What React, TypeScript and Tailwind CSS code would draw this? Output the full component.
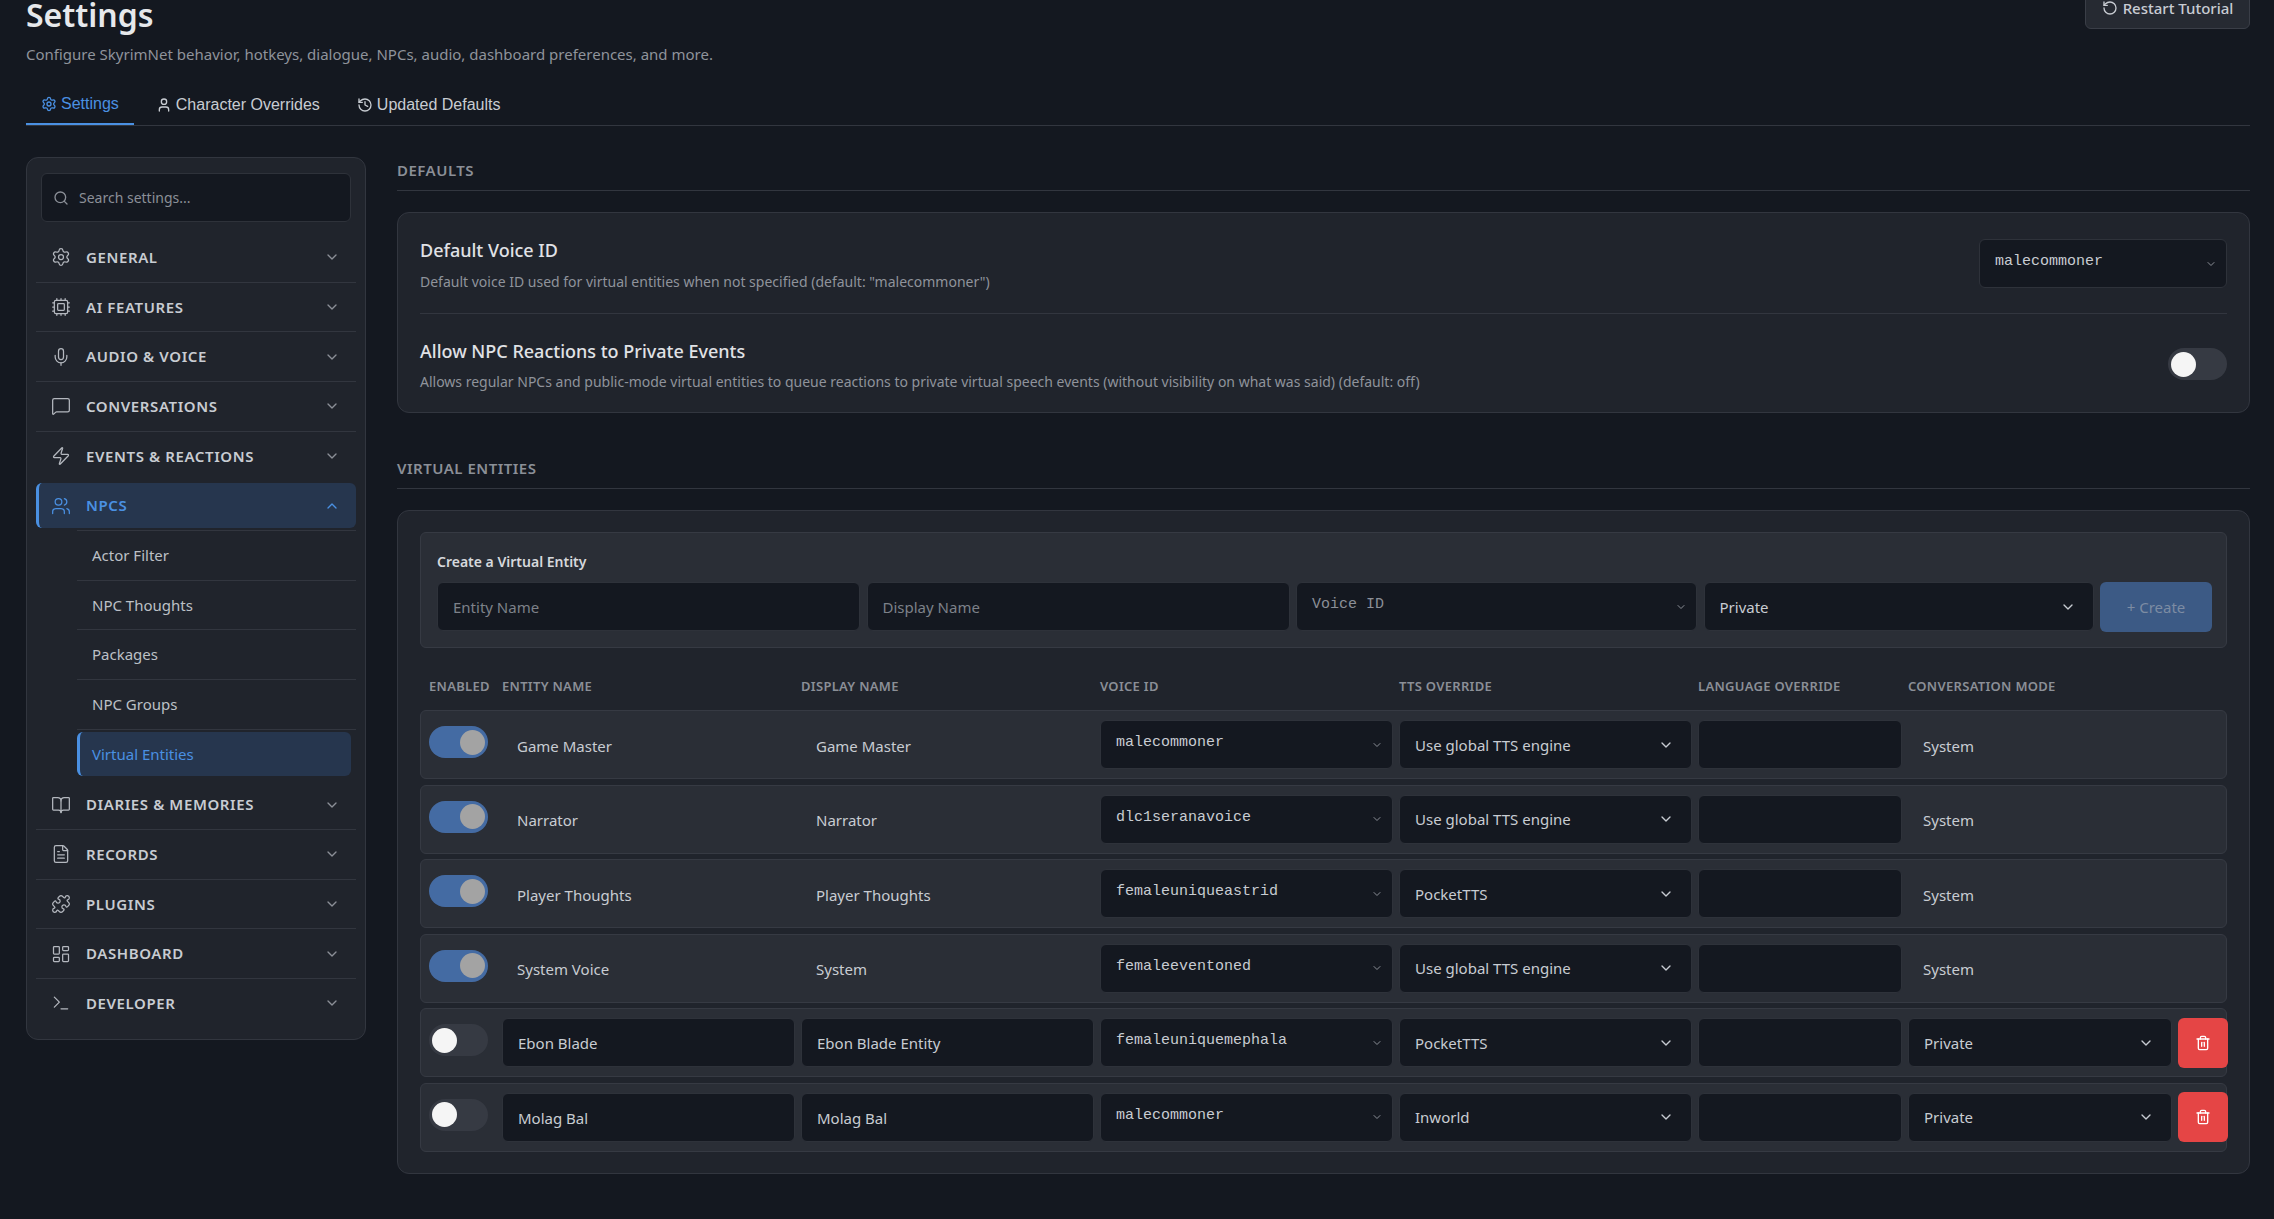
import { BookOpen, ChevronDown, ChevronUp, Cpu, FileText, History, LayoutDashboard, MessageSquare, Mic, Puzzle, RotateCcw, Search, Settings, Terminal, Trash2, User, Users, Zap } from "lucide-react";

const groupsTop = [
    { label: "General", icon: Settings },
    { label: "AI Features", icon: Cpu },
    { label: "Audio & Voice", icon: Mic },
    { label: "Conversations", icon: MessageSquare },
];
const groupsBottom = [
    { label: "Records", icon: FileText },
    { label: "Plugins", icon: Puzzle },
    { label: "Dashboard", icon: LayoutDashboard },
    { label: "Developer", icon: Terminal },
];
const subItems = ["Actor Filter", "NPC Thoughts", "Packages", "NPC Groups"];

const entities = [
    { enabled: true, name: "Game Master", display: "Game Master", voice: "malecommoner", tts: "Use global TTS engine" },
    { enabled: true, name: "Narrator", display: "Narrator", voice: "dlc1seranavoice", tts: "Use global TTS engine" },
    { enabled: true, name: "Player Thoughts", display: "Player Thoughts", voice: "femaleuniqueastrid", tts: "PocketTTS" },
    { enabled: true, name: "System Voice", display: "System", voice: "femaleeventoned", tts: "Use global TTS engine" },
    { enabled: false, name: "Ebon Blade", display: "Ebon Blade Entity", voice: "femaleuniquemephala", tts: "PocketTTS", custom: true },
    { enabled: false, name: "Molag Bal", display: "Molag Bal", voice: "malecommoner", tts: "Inworld", custom: true },
];

const NavRow = ({ label, icon: Icon, line = true }: { label: string; icon: React.ElementType; line?: boolean }) => (
    <div className={`mb-[2px] border-b pb-[2px] ${line ? "border-[#32363f]" : "border-transparent"}`}>
        <div className="flex h-[44.67px] items-center pl-[15px] pr-[16px]">
            <Icon size={20} strokeWidth={1.5} className="text-[#b4b8bf]" />
            <span className="ml-[15px] flex-1 text-[15px] font-semibold uppercase tracking-[0.6px] text-[#c8ccd2]">{label}</span>
            <ChevronDown size={16} className="text-[#8b8f97]" />
        </div>
    </div>
);

const Toggle = ({ on }: { on: boolean }) => (
    <div className={`flex h-[32px] w-[59px] items-center rounded-full px-[3px] ${on ? "justify-end bg-[#446ba3]" : "bg-[#363a43]"}`}>
        <div className={`h-[25px] w-[25px] rounded-full ${on ? "bg-[#a3a3a3]" : "bg-[#f5f5f5]"}`} />
    </div>
);

const MonoSelect = ({ value, placeholder }: { value: string; placeholder?: boolean }) => (
    <div className="flex h-[49px] items-center rounded-[6px] border border-[#2e323a] bg-[#141820] pl-[15px] pr-[9px]">
        <span className={`flex-1 pb-[2px] font-['Liberation_Mono',monospace] text-[15px] ${placeholder ? "text-[#8b8f97]" : "text-[#c8ccd2]"}`}>{value}</span>
        <ChevronDown size={12} className="text-[#8b8f97]" />
    </div>
);

const TextSelect = ({ value }: { value: string }) => (
    <div className="flex h-[49px] items-center rounded-[6px] border border-[#2e323a] bg-[#141820] pl-[15px] pr-[17px]">
        <span className="flex-1 pt-[1px] text-[15px] text-[#c8ccd2]">{value}</span>
        <ChevronDown size={16} className="text-[#c8ccd2]" />
    </div>
);

const Field = ({ value }: { value?: string }) => (
    <input defaultValue={value} className="h-[49px] w-full rounded-[6px] border border-[#2e323a] bg-[#141820] px-[15px] pt-[1px] text-[15px] text-[#c8ccd2] outline-none" />
);

const SectionTitle = ({ children }: { children: string }) => (
    <div className="h-[34px] border-b border-[#32363f] pt-[3px] text-[15px] font-semibold uppercase leading-[20px] tracking-[0.5px] text-[#8b8f97]">{children}</div>
);

const tableCols = "grid grid-cols-[67px_293px_293px_293px_293px_204px_264px_50px] gap-[6px]";

export default function App() {
    return (
        <div className="h-screen overflow-hidden bg-[#141820] pl-[26px] pr-[24px] font-['Noto_Sans',sans-serif] text-[#c8ccd2]">
            <div className="-mt-[11px] flex items-start justify-between">
                <div className="pt-[6px]">
                    <h1 className="text-[32px] font-semibold leading-[40px] text-[#e6e8eb]">Settings</h1>
                    <p className="mt-[7px] text-[15px] leading-[24px] text-[#8f939b]">Configure SkyrimNet behavior, hotkeys, dialogue, NPCs, audio, dashboard preferences, and more.</p>
                </div>
                <button className="flex h-[40px] w-[165px] items-center justify-center gap-[5px] rounded-[6px] border border-[#3a3e47] bg-[#262a32] pb-[2px] text-[15px] font-medium text-[#c8ccd2]">
                    <RotateCcw size={16} />
                    Restart Tutorial
                </button>
            </div>

            <div className="mt-[19px] flex gap-[7px] border-b border-[#32363f] font-['Liberation_Sans',sans-serif] text-[16px]">
                <div className="-mb-px flex h-[40px] items-center gap-[4px] border-b-2 border-[#4a90e2] px-[15px] text-[#4a90e2]">
                    <Settings size={16} />
                    Settings
                </div>
                <div className="flex h-[40px] items-center gap-[4px] px-[15px] text-[#c8ccd2]">
                    <User size={16} />
                    Character Overrides
                </div>
                <div className="flex h-[40px] items-center gap-[4px] px-[15px] text-[#c8ccd2]">
                    <History size={16} />
                    Updated Defaults
                </div>
            </div>

            <div className="mt-[31px] flex items-start gap-[31px]">
                <aside className="h-[883px] w-[340px] shrink-0 rounded-[12px] border border-[#32363f] bg-[#20242c] px-[9px] pt-[15px]">
                    <div className="mx-[5px] mb-[13px] flex h-[49px] items-center gap-[10px] rounded-[6px] border border-[#2e323a] bg-[#141820] px-[11px] text-[#8b8f97]">
                        <Search size={16} />
                        <span className="text-[14px]">Search settings...</span>
                    </div>
                    {groupsTop.map((g) => (
                        <NavRow key={g.label} label={g.label} icon={g.icon} />
                    ))}
                    <NavRow label="Events & Reactions" icon={Zap} line={false} />
                    <div className="flex h-[44.67px] items-center rounded-[6px] border-l-[3px] border-[#4a90e2] bg-[#26364e] pl-[12px] pr-[16px] text-[#4a90e2]">
                        <Users size={20} strokeWidth={1.5} />
                        <span className="ml-[15px] flex-1 text-[15px] font-semibold uppercase tracking-[0.6px]">NPCs</span>
                        <ChevronUp size={16} />
                    </div>
                    <div className="ml-[41px] mt-[2px] border-t border-[#32363f] pt-[2px]">
                        {subItems.map((s) => (
                            <div key={s} className="mb-[2px] border-b border-[#32363f] pb-[2px]">
                                <div className="flex h-[44.67px] items-center pl-[15px] text-[15px] text-[#bcc0c6]">{s}</div>
                            </div>
                        ))}
                        <div className="mb-[6px] mr-[5px] flex h-[44.67px] items-center rounded-[6px] border-l-[3px] border-[#4a90e2] bg-[#26364e] pl-[12px] text-[15px] text-[#4a90e2]">Virtual Entities</div>
                    </div>
                    <NavRow label="Diaries & Memories" icon={BookOpen} />
                    {groupsBottom.map((g, i) => (
                        <NavRow key={g.label} label={g.label} icon={g.icon} line={i < groupsBottom.length - 1} />
                    ))}
                </aside>

                <main className="min-w-0 flex-1">
                    <SectionTitle>Defaults</SectionTitle>
                    <section className="mt-[21px] h-[201px] rounded-[12px] border border-[#32363f] bg-[#20242c] px-[22px] pt-[21px]">
                        <div className="flex h-[80px] items-start justify-between border-b border-[#32363f]">
                            <div className="pt-[4px]">
                                <div className="text-[18px] font-medium leading-[24px] text-[#e0e2e6]">Default Voice ID</div>
                                <div className="mt-[8px] text-[14px] leading-[24px] text-[#8f939b]">Default voice ID used for virtual entities when not specified (default: "malecommoner")</div>
                            </div>
                            <div className="mt-[5px] w-[248px]">
                                <MonoSelect value="malecommoner" />
                            </div>
                        </div>
                        <div className="flex items-start justify-between">
                            <div className="pt-[25px]">
                                <div className="text-[18px] font-medium leading-[24px] text-[#e0e2e6]">Allow NPC Reactions to Private Events</div>
                                <div className="mt-[7px] text-[14px] leading-[24px] text-[#8f939b]">Allows regular NPCs and public-mode virtual entities to queue reactions to private virtual speech events (without visibility on what was said) (default: off)</div>
                            </div>
                            <div className="mt-[34px]">
                                <Toggle on={false} />
                            </div>
                        </div>
                    </section>

                    <div className="mt-[42px]">
                        <SectionTitle>Virtual Entities</SectionTitle>
                    </div>
                    <section className="mt-[21px] rounded-[12px] border border-[#32363f] bg-[#20242c] px-[22px] py-[21px]">
                        <div className="h-[116px] rounded-[6px] border border-[#363a43] bg-[#2a2e36] px-[16px] pt-[19px]">
                            <div className="text-[14px] font-semibold leading-[20px] text-[#d6d8dc]">Create a Virtual Entity</div>
                            <div className="mt-[10px] grid grid-cols-[423px_423px_401px_390px_112px] gap-[6.5px]">
                                <input placeholder="Entity Name" className="h-[49px] rounded-[6px] border border-[#2e323a] bg-[#141820] px-[15px] pt-[1px] text-[15px] outline-none placeholder:text-[#7d8189]" />
                                <input placeholder="Display Name" className="h-[49px] rounded-[6px] border border-[#2e323a] bg-[#141820] px-[15px] pt-[1px] text-[15px] outline-none placeholder:text-[#7d8189]" />
                                <MonoSelect value="Voice ID" placeholder />
                                <TextSelect value="Private" />
                                <button className="flex h-[50px] items-center justify-center gap-[4px] rounded-[6px] bg-[#3c5a85] text-[15px] text-[#7d8ca3]">+ Create</button>
                            </div>
                        </div>

                        <div className={`${tableCols} mt-[28px] pl-[9px] text-[13px] font-semibold uppercase leading-[20px] tracking-[0.3px] text-[#8b8f97]`}>
                            <div>Enabled</div>
                            <div>Entity Name</div>
                            <div>Display Name</div>
                            <div>Voice ID</div>
                            <div>TTS Override</div>
                            <div>Language Override</div>
                            <div>Conversation Mode</div>
                        </div>

                        <div className="mt-[14px] flex flex-col gap-[5.5px]">
                            {entities.map((e) => (
                                <div key={e.name} className={`${tableCols} h-[69px] items-center rounded-[6px] border border-[#363a43] bg-[#2a2e36] pl-[8px] text-[15px]`}>
                                    <div className="mb-[5px]">
                                        <Toggle on={e.enabled} />
                                    </div>
                                    {e.custom ? <Field value={e.name} /> : <div className="pl-[15px] pt-[3px]">{e.name}</div>}
                                    {e.custom ? <Field value={e.display} /> : <div className="pl-[15px] pt-[3px]">{e.display}</div>}
                                    <MonoSelect value={e.voice} />
                                    <TextSelect value={e.tts} />
                                    <Field />
                                    {e.custom ? <TextSelect value="Private" /> : <div className="pl-[15px] pt-[3px]">System</div>}
                                    {e.custom && (
                                        <button className="flex h-[50px] w-[50px] items-center justify-center rounded-[6px] bg-[#e54545] text-white">
                                            <Trash2 size={16} />
                                        </button>
                                    )}
                                </div>
                            ))}
                        </div>
                    </section>
                </main>
            </div>
        </div>
    );
}
